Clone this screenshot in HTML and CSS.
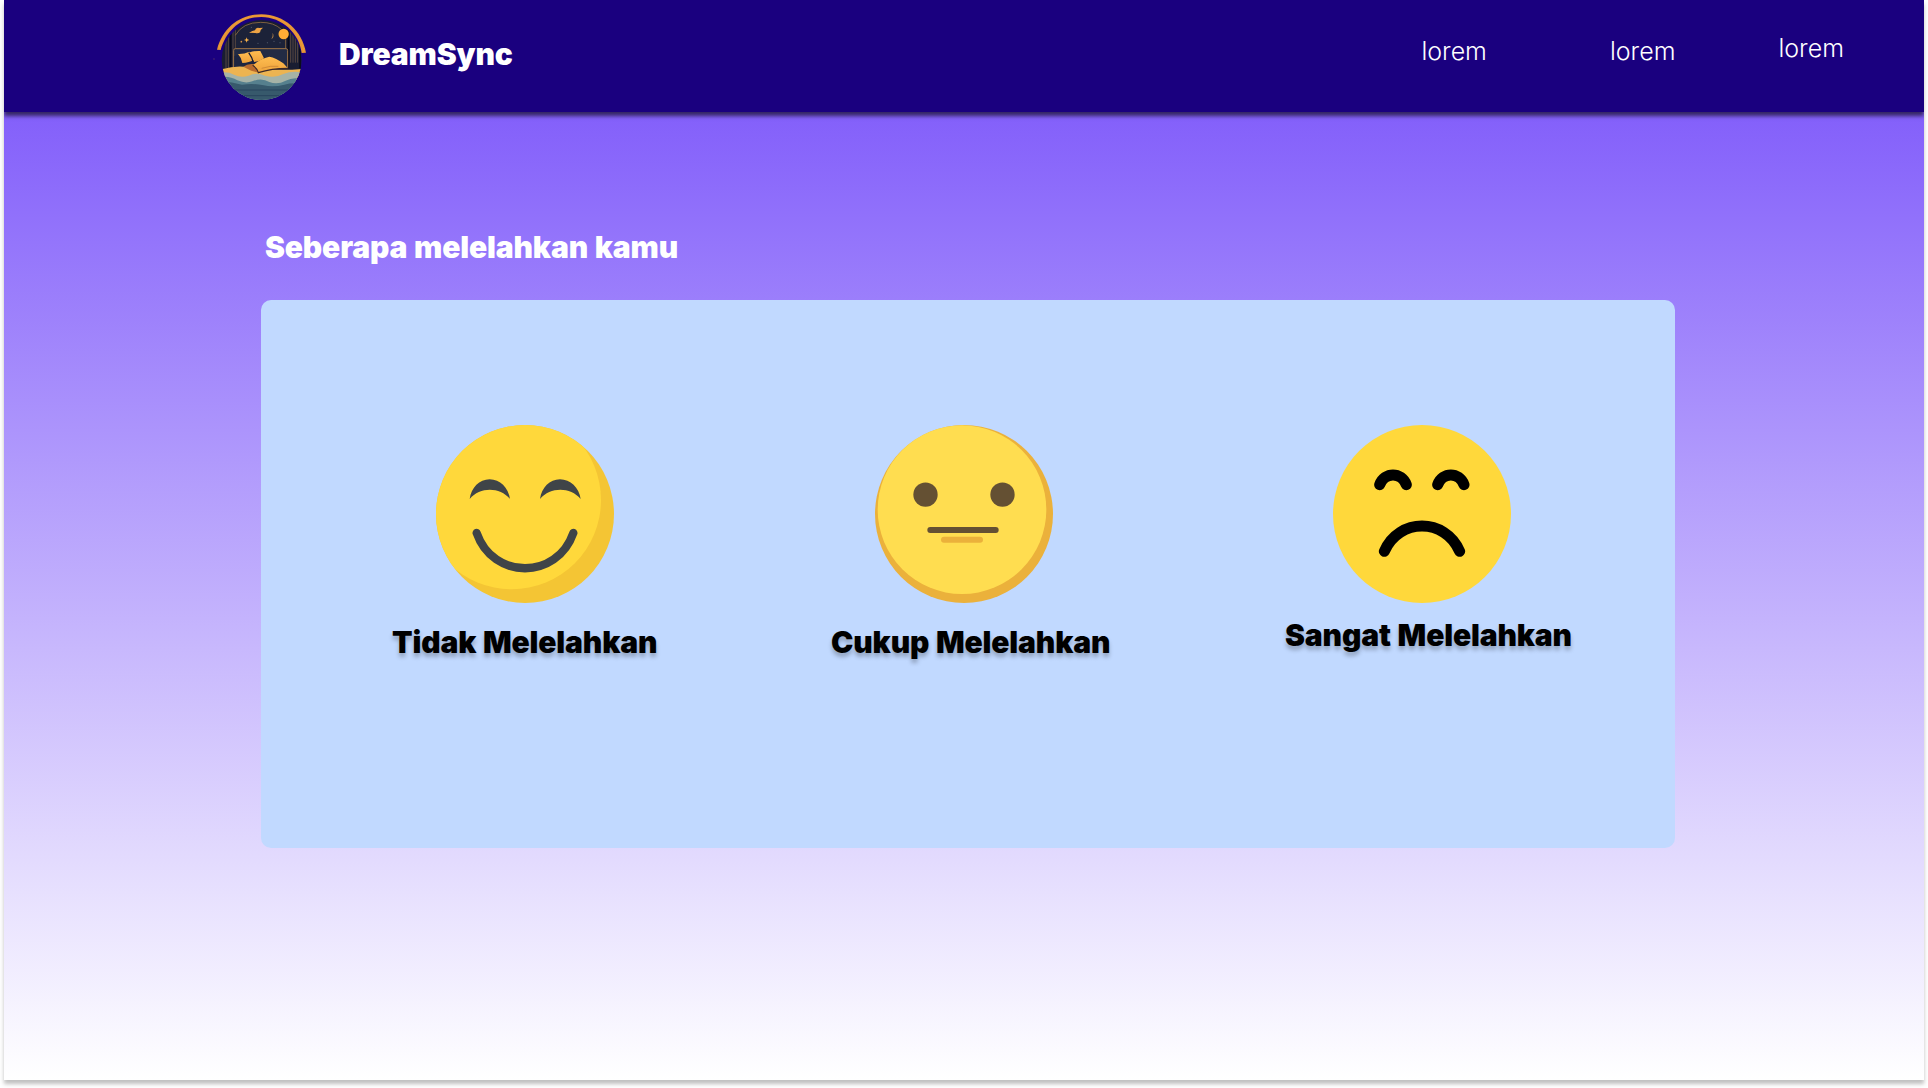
FILE: index.html
```
<!DOCTYPE html>
<html lang="id">
<head>
<meta charset="utf-8">
<title>DreamSync</title>
<link rel="stylesheet" href="styles.css">
</head>
<body>
<div class="page">
  <header class="header">
    <svg class="logo" viewBox="36 36 288 270" aria-hidden="true">
      <defs>
        <clipPath id="disc"><circle cx="185" cy="180" r="120"/></clipPath>
        <linearGradient id="gold" x1="0" y1="0" x2="0" y2="1">
          <stop offset="0" stop-color="#ffbd50"/><stop offset="1" stop-color="#eda23b"/>
        </linearGradient>
      </defs>
      <g clip-path="url(#disc)">
        <rect x="60" y="50" width="250" height="260" fill="#191d32"/>
        <path d="M106 205V112Q125 66 182 66T258 112V205Z" fill="#1c2238"/>
        <path d="M78 100V205M85 92V205M99 84V205M106 80V205M272 84V188M279 90V188M286 100V188M293 105V188" stroke="#645143" stroke-width="2.5" fill="none"/>
        <path d="M92 80V205M265 78V205M300 115V205" stroke="#090b19" stroke-width="5"/>
        <path d="M106 106Q128 67 182 67Q222 67 244 88M257 118V145" stroke="#b18245" stroke-width="2" fill="none"/>
        <path d="M101 205V151Q101 146 106 146H258Q263 146 263 151V205" fill="#222b44" stroke="#a07646" stroke-width="3"/>
        <path d="M103 168Q150 151 195 168V210H103Z" fill="#1d2540"/>
        <path d="M147 98Q158 92 165 91Q167 81 178 84L189 83Q179 90 181 96Q176 101 166 99Z" fill="#eda344"/>
        <path d="M218 98Q225 110 214 118Q219 109 218 98Z" fill="#a37a49"/>
        <circle cx="251" cy="102" r="15.5" fill="#ffac35"/>
        <path d="M140 112l2 6 6 2-6 2-2 6-2-6-6-2 6-2Z" fill="#ffb74a"/>
        <circle cx="124" cy="125" r="2.5" fill="#d69548"/>
        <g fill="#68717f"><circle cx="174" cy="130" r="1.5"/><circle cx="202" cy="128" r="1.5"/><circle cx="222" cy="124" r="1.5"/><circle cx="240" cy="128" r="1.5"/><circle cx="154" cy="82" r="1.5"/></g>
        <path d="M68 207Q115 193 165 205Q240 213 305 207V240H68Z" fill="#edb451"/>
        <path d="M114 162Q132 163 148 155L160 181Q148 188 127 189Q125 174 114 162Z" fill="url(#gold)"/>
        <path d="M146 158Q163 152 181 153L192 175Q180 184 163 186Z" fill="url(#gold)"/>
        <path d="M146 158Q157 173 159 185" stroke="#191d32" stroke-width="4" fill="none"/>
        <path d="M130 200Q143 189 166 193L174 217Q154 214 143 207Z" fill="#b96b2e"/>
        <path d="M159 196Q180 176 208 170Q228 173 250 190L263 204Q215 206 175 218Q172 205 159 196Z" fill="url(#gold)"/>
        <path d="M158 196Q170 204 175 218Q215 205 264 205" stroke="#3b2828" stroke-width="3.500" fill="none"/>
        <path d="M185 205Q212 196 235 199" stroke="#c07a30" stroke-width="2" fill="none"/>
        <path d="M64 217Q87 215 102 224Q123 235 146 227Q170 216 195 227Q226 235 250 222Q278 211 307 218V305H64Z" fill="#a6b3a7"/>
        <path d="M64 231Q91 228 112 241Q137 252 157 244Q185 232 208 246Q233 255 257 242Q278 230 307 237V305H64Z" fill="#56808e"/>
        <path d="M64 244Q96 247 126 254Q160 249 191 256Q220 262 253 254Q275 248 307 251V305H64Z" fill="#37596c"/>
        <path d="M68 270H305M68 287H305" stroke="#213b54" stroke-width="2"/>
      </g>
      <path d="M51 149C69 82 120 43 184 43C253 43 307 93 318 158L305 159C298 100 246 51 184 51C122 51 78 93 62 150Z" fill="#e59436"/>
      <path d="M57 145C73 84 125 47 184 47C250 47 302 95 312 155" fill="none" stroke="#f09d35" stroke-width="3"/>
      <circle cx="42" cy="177" r="2" fill="#5b3266"/>
    </svg>
    <span class="brand">DreamSync</span>
    <nav class="nav">
      <a class="nav-link">lorem</a>
      <a class="nav-link">lorem</a>
      <a class="nav-link nav-link-last">lorem</a>
    </nav>
  </header>
  <main class="main">
    <h1 class="title">Seberapa melelahkan kamu</h1>
    <section class="card">
      <div class="option option-low">
        <svg class="face" viewBox="48 45 534 534" aria-hidden="true">
          <defs><clipPath id="face-disc"><circle cx="315" cy="312" r="267"/></clipPath></defs>
          <circle cx="315" cy="312" r="267" fill="#f4c534"/>
          <circle cx="275" cy="270" r="268" fill="#ffd83b" clip-path="url(#face-disc)"/>
          <path d="M149 267C154 233 178 208 209 208S265 233 270 267C239 230 180 230 149 267ZM360 267C365 233 389 208 420 208S477 233 482 267C451 230 391 230 360 267Z" fill="#3f4448"/>
          <path d="M170 369C219 510 411 510 460 369" fill="none" stroke="#3f4448" stroke-width="25" stroke-linecap="round"/>
        </svg>
        <span class="label">Tidak Melelahkan</span>
      </div>
      <div class="option option-mid">
        <svg class="face" viewBox="45 45 534 534" aria-hidden="true">
          <circle cx="312" cy="312" r="267" fill="#ebb13b"/>
          <ellipse cx="306" cy="299" rx="253" ry="253" fill="#ffdd50"/>
          <circle cx="196.500" cy="254" r="36.500" fill="#645033"/>
          <circle cx="427.500" cy="254" r="36.500" fill="#645033"/>
          <rect x="202" y="351" width="214" height="18" rx="9" fill="#645033"/>
          <rect x="243" y="380" width="126" height="18" rx="9" fill="#ebb13b"/>
        </svg>
        <span class="label">Cukup Melelahkan</span>
      </div>
      <div class="option option-high">
        <svg class="face" viewBox="39 45 534 534" aria-hidden="true">
          <circle cx="306" cy="312" r="267" fill="#ffd83b"/>
          <path d="M179 224C194 185 244 185 259 224M353 224C368 185 417 185 432 224M193 424C237 323 375 323 419 424" fill="none" stroke="#000" stroke-width="33" stroke-linecap="round"/>
        </svg>
        <span class="label">Sangat Melelahkan</span>
      </div>
    </section>
  </main>
</div>
</body>
</html>
```
FILE: styles.css
```
* {
  box-sizing: border-box;
}

body {
  margin: 0;
  height: 1088px;
  overflow: hidden;
  background: #fff;
  font-family: Inter, "Liberation Sans", sans-serif;
}

.page {
  width: 1920px;
  height: 1080px;
  margin: 0 4px;
  background: linear-gradient(180deg, #754dfa 0%, #fff 100%);
  box-shadow: 0 4px 4px rgba(0, 0, 0, 0.25);
}

.header {
  display: flex;
  align-items: flex-start;
  height: 112px;
  padding: 0 80px 0 208px;
  background: #1a007f;
  box-shadow: 0 4px 4px rgba(0, 0, 0, 0.6);
  clip-path: inset(0 0 -10px 0);
}

.logo {
  width: 96px;
  height: 90px;
  margin-top: 12px;
}

.brand,
.title,
.label {
  font-size: 30px;
  font-weight: 900;
  line-height: 36px;
  letter-spacing: -0.15px;
  word-spacing: 1px;
  white-space: nowrap;
}

.brand {
  margin: 36px 0 0 31px;
  color: #fff;
}

.nav {
  display: flex;
  gap: 123px;
  margin-left: auto;
  padding-top: 36px;
}

.nav-link {
  color: #fff;
  font-size: 25px;
  font-weight: 300;
  line-height: 30px;
}

.nav-link-last {
  margin: -3px 0 0 -20px;
}

.main {
  padding: 117px 249px 0 257px;
}

.title {
  margin: 0 0 35px 4px;
  color: #fff;
}

.card {
  display: flex;
  height: 548px;
  padding: 125px 0 0 131px;
  border-radius: 10px;
  background: #c1d9ff;
}

.option {
  display: flex;
  flex-direction: column;
}

.option-low {
  width: 439px;
}

.option-mid {
  width: 454px;
}

.face {
  width: 178px;
  height: 178px;
  margin: 0 0 21px 44px;
}

.option-high .face {
  margin: 0 0 14px 48px;
}

.label {
  color: #000;
  text-shadow: 0 4px 4px rgba(0, 0, 0, 0.25);
}
```
